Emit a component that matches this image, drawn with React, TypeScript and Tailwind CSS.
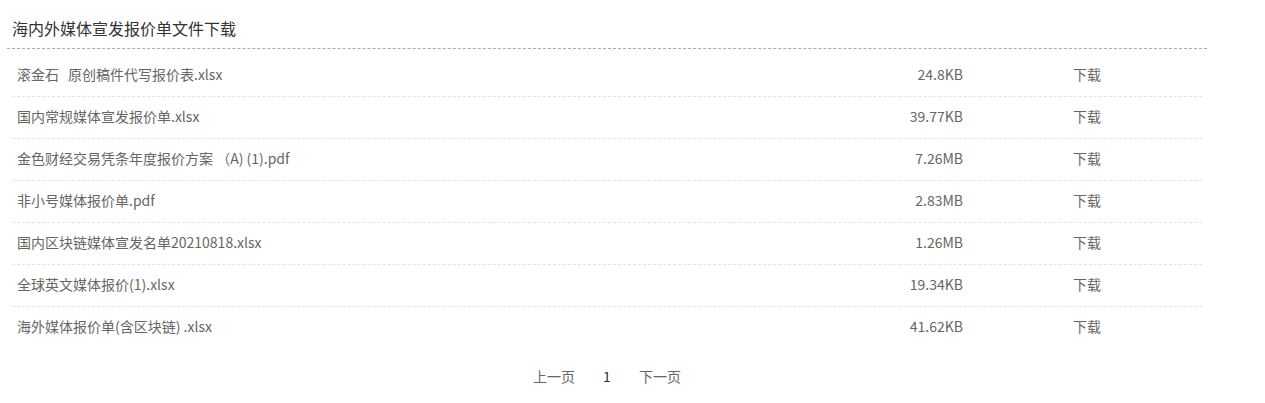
import React from "react";

const files = [
  { name: ["滚金石", "原创稿件代写报价表.xlsx"], size: "24.8KB" },
  { name: ["国内常规媒体宣发报价单.xlsx"], size: "39.77KB" },
  { name: ["金色财经交易凭条年度报价方案 （A) (1).pdf"], size: "7.26MB" },
  { name: ["非小号媒体报价单.pdf"], size: "2.83MB" },
  { name: ["国内区块链媒体宣发名单20210818.xlsx"], size: "1.26MB" },
  { name: ["全球英文媒体报价(1).xlsx"], size: "19.34KB" },
  { name: ["海外媒体报价单(含区块链) .xlsx"], size: "41.62KB" },
];

export default function App() {
  return (
    <div
      className="w-[1265px] h-[403px] bg-white"
      style={{ fontFamily: '"Microsoft YaHei", "Noto Sans CJK SC", sans-serif' }}
    >
      <div className="ml-[7px] w-[1200px]">
        <div className="pt-[16px] pb-[8px] pl-[5px] text-[16px] leading-[24px] text-[#333] border-b border-dashed border-[#aaa]">
          海内外媒体宣发报价单文件下载
        </div>
        <div className="mx-[5px] mt-[6px]">
          {files.map((f, i) => (
            <div
              key={i}
              className={
                "flex h-[42px] items-center pl-[5px] pb-[3px] text-[14px] text-[#666] " +
                (i < files.length - 1 ? "border-b border-dashed border-[#e3e3e3]" : "")
              }
            >
              <div className="flex-1 whitespace-pre">
                {f.name.length > 1 ? (
                  <>
                    {f.name[0]}
                    <span className="inline-block w-[9px]"> </span>
                    {f.name[1]}
                  </>
                ) : (
                  f.name[0]
                )}
              </div>
              <div className="w-[150px] text-right">{f.size}</div>
              <div className="w-[239px] pl-[110px]">下载</div>
            </div>
          ))}
        </div>
        <div className="flex justify-center items-center gap-[28px] mt-[15px] text-[14px] text-[#666] leading-[24px]">
          <span>上一页</span>
          <span className="text-[#333]">1</span>
          <span>下一页</span>
        </div>
      </div>
    </div>
  );
}
